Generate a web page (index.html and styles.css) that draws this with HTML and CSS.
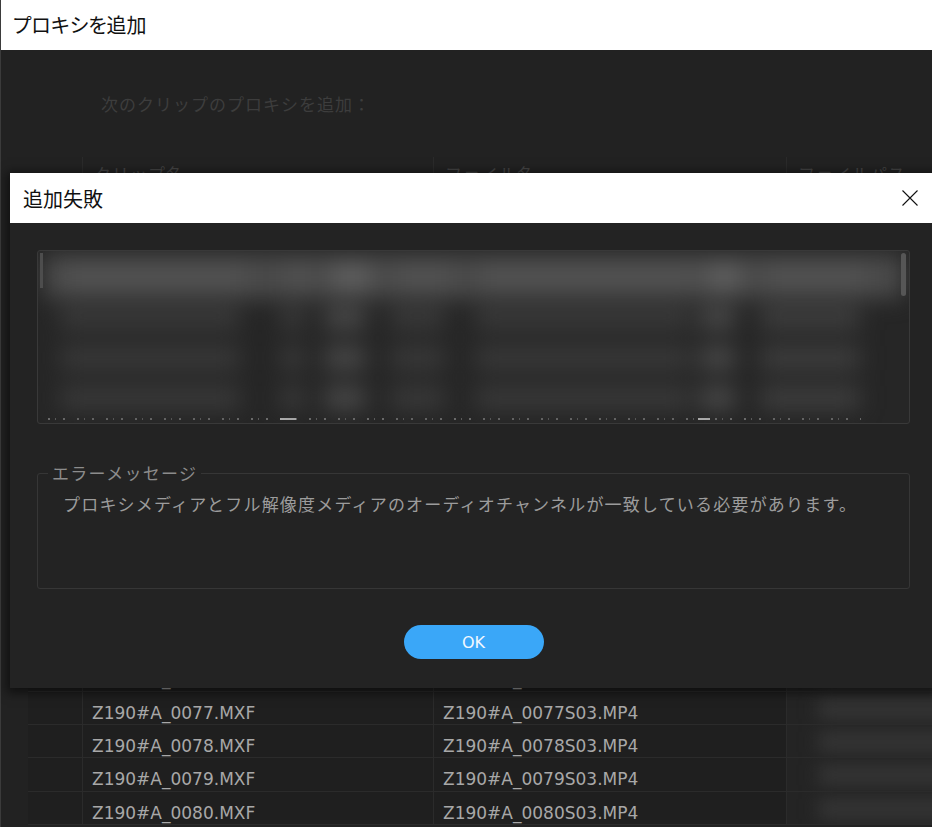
FILE: index.html
```html
<!DOCTYPE html>
<html lang="ja">
<head>
    <meta charset="UTF-8">
    <meta name="viewport" content="width=device-width, initial-scale=1.0">
    <title>プロキシを追加</title>
    <link rel="stylesheet" href="styles.css">
</head>
<body>
    <!-- main window: clip list -->
    <div class="window">
        <div class="titlebar">プロキシを追加</div>
        <div class="window-body">
            <p class="prompt">次のクリップのプロキシを追加：</p>

            <div class="clip-table">
                <div class="row head">
                    <div class="cell check"></div>
                    <div class="cell">クリップ名</div>
                    <div class="cell">ファイル名</div>
                    <div class="cell">ファイルパス</div>
                </div>
                <div class="row"><div class="cell check"></div><div class="cell">Z190#A_0062.MXF</div><div class="cell">Z190#A_0062S03.MP4</div><div class="cell path"><span class="path-blur"></span></div></div>
                <div class="row"><div class="cell check"></div><div class="cell">Z190#A_0063.MXF</div><div class="cell">Z190#A_0063S03.MP4</div><div class="cell path"><span class="path-blur"></span></div></div>
                <div class="row"><div class="cell check"></div><div class="cell">Z190#A_0064.MXF</div><div class="cell">Z190#A_0064S03.MP4</div><div class="cell path"><span class="path-blur"></span></div></div>
                <div class="row"><div class="cell check"></div><div class="cell">Z190#A_0065.MXF</div><div class="cell">Z190#A_0065S03.MP4</div><div class="cell path"><span class="path-blur"></span></div></div>
                <div class="row"><div class="cell check"></div><div class="cell">Z190#A_0066.MXF</div><div class="cell">Z190#A_0066S03.MP4</div><div class="cell path"><span class="path-blur"></span></div></div>
                <div class="row"><div class="cell check"></div><div class="cell">Z190#A_0067.MXF</div><div class="cell">Z190#A_0067S03.MP4</div><div class="cell path"><span class="path-blur"></span></div></div>
                <div class="row"><div class="cell check"></div><div class="cell">Z190#A_0068.MXF</div><div class="cell">Z190#A_0068S03.MP4</div><div class="cell path"><span class="path-blur"></span></div></div>
                <div class="row"><div class="cell check"></div><div class="cell">Z190#A_0069.MXF</div><div class="cell">Z190#A_0069S03.MP4</div><div class="cell path"><span class="path-blur"></span></div></div>
                <div class="row"><div class="cell check"></div><div class="cell">Z190#A_0070.MXF</div><div class="cell">Z190#A_0070S03.MP4</div><div class="cell path"><span class="path-blur"></span></div></div>
                <div class="row"><div class="cell check"></div><div class="cell">Z190#A_0071.MXF</div><div class="cell">Z190#A_0071S03.MP4</div><div class="cell path"><span class="path-blur"></span></div></div>
                <div class="row"><div class="cell check"></div><div class="cell">Z190#A_0072.MXF</div><div class="cell">Z190#A_0072S03.MP4</div><div class="cell path"><span class="path-blur"></span></div></div>
                <div class="row"><div class="cell check"></div><div class="cell">Z190#A_0073.MXF</div><div class="cell">Z190#A_0073S03.MP4</div><div class="cell path"><span class="path-blur"></span></div></div>
                <div class="row"><div class="cell check"></div><div class="cell">Z190#A_0074.MXF</div><div class="cell">Z190#A_0074S03.MP4</div><div class="cell path"><span class="path-blur"></span></div></div>
                <div class="row"><div class="cell check"></div><div class="cell">Z190#A_0075.MXF</div><div class="cell">Z190#A_0075S03.MP4</div><div class="cell path"><span class="path-blur"></span></div></div>
                <div class="row"><div class="cell check"></div><div class="cell">Z190#A_0076.MXF</div><div class="cell">Z190#A_0076S03.MP4</div><div class="cell path"><span class="path-blur"></span></div></div>
                <div class="row"><div class="cell check"></div><div class="cell">Z190#A_0077.MXF</div><div class="cell">Z190#A_0077S03.MP4</div><div class="cell path"><span class="path-blur"></span></div></div>
                <div class="row"><div class="cell check"></div><div class="cell">Z190#A_0078.MXF</div><div class="cell">Z190#A_0078S03.MP4</div><div class="cell path"><span class="path-blur"></span></div></div>
                <div class="row"><div class="cell check"></div><div class="cell">Z190#A_0079.MXF</div><div class="cell">Z190#A_0079S03.MP4</div><div class="cell path"><span class="path-blur"></span></div></div>
                <div class="row"><div class="cell check"></div><div class="cell">Z190#A_0080.MXF</div><div class="cell">Z190#A_0080S03.MP4</div><div class="cell path"><span class="path-blur"></span></div></div>
            </div>
        </div>
    </div>

    <!-- error dialog -->
    <div class="dialog">
        <div class="dialog-title">
            <span>追加失敗</span>
            <button class="close-btn" aria-label="閉じる">
                <svg width="16" height="16" viewBox="0 0 16 16">
                    <path d="M0.5 0.5 L15.5 15.5 M15.5 0.5 L0.5 15.5" stroke="#111" stroke-width="1.1" fill="none"/>
                </svg>
            </button>
        </div>

        <div class="dialog-body">
            <div class="fail-list">
                <div class="fail-rows">
                    <div class="blur-row top">
                        <span class="b1"></span><span class="b2"></span><span class="b3"></span><span class="b4"></span><span class="b5"></span><span class="b6"></span><span class="b7"></span>
                    </div>
                    <div class="blur-row">
                        <span class="b1"></span><span class="b2"></span><span class="b3"></span><span class="b4"></span><span class="b5"></span><span class="b6"></span><span class="b7"></span>
                    </div>
                    <div class="blur-row">
                        <span class="b1"></span><span class="b2"></span><span class="b3"></span><span class="b4"></span><span class="b5"></span><span class="b6"></span><span class="b7"></span>
                    </div>
                    <div class="blur-row">
                        <span class="b1"></span><span class="b2"></span><span class="b3"></span><span class="b4"></span><span class="b5"></span><span class="b6"></span><span class="b7"></span>
                    </div>
                </div>
                <div class="cut-row"></div>
                <span class="thumb left"></span>
                <span class="thumb right"></span>
            </div>

            <fieldset class="error-group">
                <legend>エラーメッセージ</legend>
                <p>プロキシメディアとフル解像度メディアのオーディオチャンネルが一致している必要があります。</p>
            </fieldset>

            <div class="actions">
                <button class="ok-btn">OK</button>
            </div>
        </div>
    </div>
</body>
</html>
```

FILE: styles.css
```css
* {
    box-sizing: border-box;
}

html, body {
    margin: 0;
    height: 100%;
}

body {
    position: relative;
    overflow: hidden;
    background-color: #1c1c1c;
    font-family: "Noto Sans CJK JP", "Noto Sans", sans-serif;
}

/* ---------- main window ---------- */

.window {
    display: flex;
    flex-direction: column;
    height: 827px;
    border-left: 1px solid #3b3b3b;
    background-color: #222;
}

.titlebar {
    flex: none;
    height: 50px;
    padding-left: 12px;
    line-height: 50px;
    background-color: #fff;
    color: #111;
    font-size: 20px;
    font-feature-settings: "palt";
}

.window-body {
    flex: 1;
    padding: 42px 0 0 27px;
    overflow: hidden;
}

.prompt {
    margin: 0 0 41px 73px;
    font-size: 17px;
    line-height: 24px;
    letter-spacing: 1px;
    color: #3d3d3d;
}

.clip-table {
    width: 960px;
    background-color: #1f1f1f;
}

.row {
    display: grid;
    grid-template-columns: 54px 351px 353px 1fr;
    height: 33.33px;
    border-bottom: 1px solid #2b2b2b;
}

.row.head {
    height: 34.67px;
    background-color: #222;
    border-bottom: none;
}

.cell {
    padding-left: 9px;
    border-left: 1px solid #2b2b2b;
    font-family: "DejaVu Sans", sans-serif;
    font-size: 17px;
    line-height: 42px;
    color: #a8a8a8;
    white-space: nowrap;
    overflow: hidden;
}

.cell.check {
    border-left: none;
}

.head .cell {
    padding-left: 11px;
    font-family: "Noto Sans CJK JP", sans-serif;
    letter-spacing: 1px;
    line-height: 34px;
    color: #454545;
}

.cell.path {
    background-color: #242424;
}

.path-blur {
    display: block;
    width: 170px;
    height: 20px;
    margin: 7px 0 0 22px;
    background-color: #363636;
    filter: blur(9px);
}

/* ---------- dialog ---------- */

.dialog {
    position: absolute;
    left: 10px;
    top: 173px;
    width: 927px;
    background-color: #232323;
    box-shadow: 0 2px 10px 3px rgba(0, 0, 0, 0.55);
}

.dialog-title {
    display: flex;
    align-items: center;
    justify-content: space-between;
    height: 50px;
    padding: 0 19px 0 13px;
    background-color: #fff;
    color: #111;
    font-size: 20px;
}

.close-btn {
    display: flex;
    width: 16px;
    height: 16px;
    padding: 0;
    border: none;
    background: none;
}

.dialog-body {
    display: flex;
    flex-direction: column;
    padding: 27px 27px 29px;
}

.fail-list {
    position: relative;
    height: 174px;
    border: 1px solid #393939;
    border-radius: 3px;
    background-color: #262626;
    overflow: hidden;
}

.fail-rows {
    height: 167px;
    padding-top: 4px;
    filter: blur(11px);
}

.blur-row {
    display: flex;
    align-items: center;
    height: 40px;
}

.blur-row.top {
    height: 43px;
    margin: 0 6px;
    background-color: #4a4a4a;
}

.blur-row span {
    height: 22px;
    background-color: #3a3a3a;
}

.blur-row .b1 { margin-left: 22px; width: 180px; }
.blur-row .b2 { margin-left: 40px; width: 25px; }
.blur-row .b3 { margin-left: 20px; width: 40px; background-color: #4a4a4a; }
.blur-row .b4 { margin-left: 25px; width: 55px; }
.blur-row .b5 { margin-left: 30px; width: 215px; }
.blur-row .b6 { margin-left: 10px; width: 35px; background-color: #4a4a4a; }
.blur-row .b7 { margin-left: 25px; width: 100px; background-color: #3f3f3f; }

.blur-row.top span {
    height: 28px;
    background-color: #525252;
}

.blur-row.top .b3,
.blur-row.top .b6 {
    background-color: #5e5e5e;
}

/* tops of the next, clipped row of text */
.cut-row {
    height: 2px;
    margin: 0 48px 0 10px;
    background-image:
        linear-gradient(90deg, transparent 0 232px, #b8b8b8 232px 248px, transparent 248px 650px, #b8b8b8 650px 662px, transparent 662px),
        repeating-linear-gradient(90deg, #6c6c6c 0 2px, transparent 2px 7px, #5c5c5c 7px 8px, transparent 8px 15px, #6c6c6c 15px 17px, transparent 17px 29px);
}

.thumb {
    position: absolute;
    top: 2px;
    background-color: #4d4d4d;
}

.thumb.left {
    left: 2px;
    width: 3px;
    height: 35px;
}

.thumb.right {
    right: 3px;
    width: 5px;
    height: 43px;
    border-radius: 3px;
    background-color: #565656;
}

.error-group {
    height: 128px;
    margin: 37px 0 0;
    padding: 9px 25px 0;
    border: 1px solid #363636;
    border-radius: 3px;
}

.error-group legend {
    margin-left: -15px;
    padding: 0 4px;
    font-size: 17px;
    line-height: 24px;
    letter-spacing: 1.3px;
    color: #8c8c8c;
}

.error-group p {
    margin: 0;
    margin-top: -2px;
    font-size: 17px;
    line-height: 24px;
    letter-spacing: 1.2px;
    color: #9c9c9c;
}

.actions {
    display: flex;
    justify-content: center;
    margin-top: 36px;
}

.ok-btn {
    width: 140px;
    height: 34px;
    border: none;
    border-radius: 17px;
    background-color: #3aa7f8;
    color: #f2f8ff;
    font-family: "DejaVu Sans", sans-serif;
    font-size: 16px;
}
```
